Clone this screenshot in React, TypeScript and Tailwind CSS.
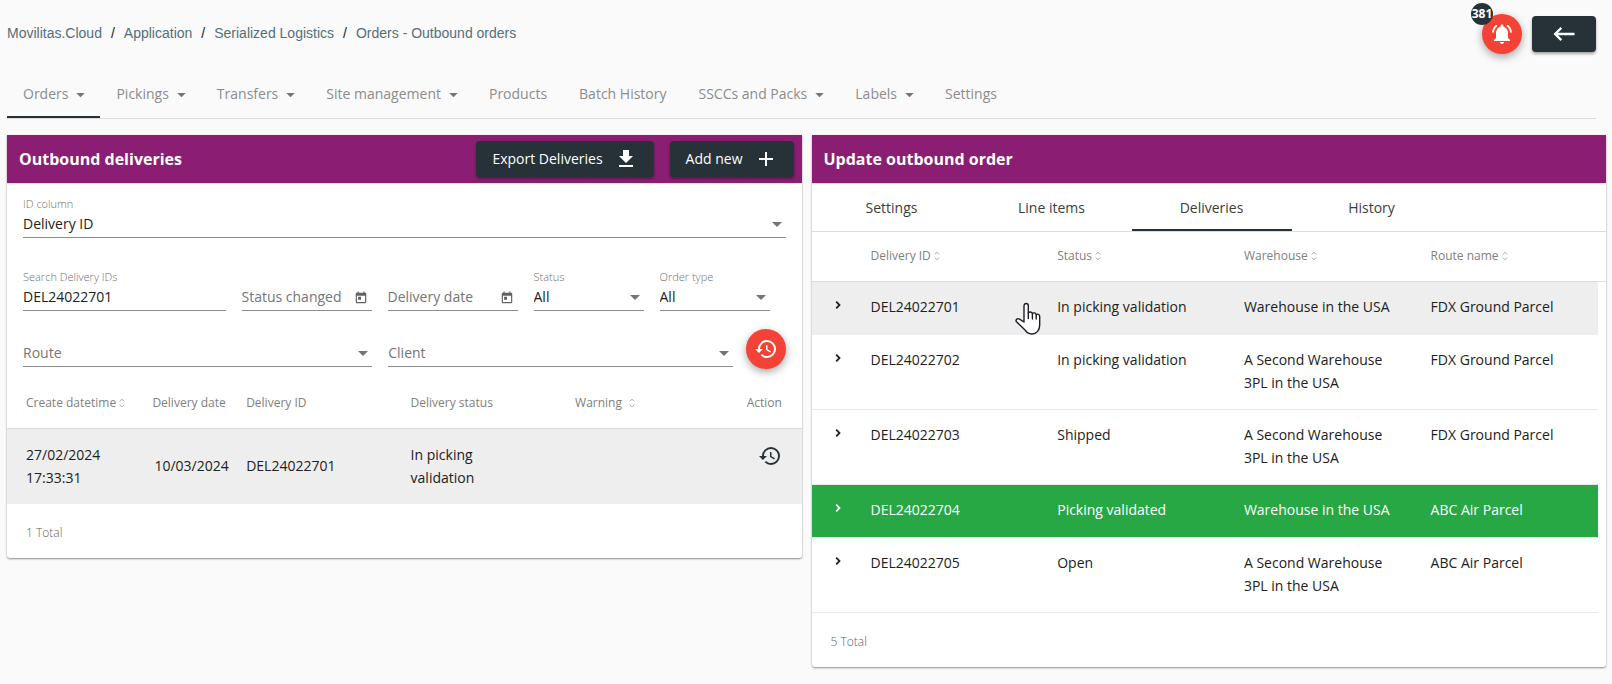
import React, { useId } from "react";
import {
  MdAdd,
  MdFileDownload,
  MdHistory,
  MdKeyboardBackspace,
  MdNotificationsActive,
  MdToday,
} from "react-icons/md";

const crumbs = ["Movilitas.Cloud", "Application", "Serialized Logistics", "Orders - Outbound orders"];

const navItems = [
  { label: "Orders", menu: true, active: true },
  { label: "Pickings", menu: true },
  { label: "Transfers", menu: true },
  { label: "Site management", menu: true },
  { label: "Products" },
  { label: "Batch History" },
  { label: "SSCCs and Packs", menu: true },
  { label: "Labels", menu: true },
  { label: "Settings" },
];

const orderTabs = ["Settings", "Line items", "Deliveries", "History"];

const deliveries = [
  { id: "DEL24022701", status: "In picking validation", warehouse: "Warehouse in the USA", route: "FDX Ground Parcel", tone: "hover" },
  { id: "DEL24022702", status: "In picking validation", warehouse: "A Second Warehouse 3PL in the USA", route: "FDX Ground Parcel", tone: "plain" },
  { id: "DEL24022703", status: "Shipped", warehouse: "A Second Warehouse 3PL in the USA", route: "FDX Ground Parcel", tone: "plain" },
  { id: "DEL24022704", status: "Picking validated", warehouse: "Warehouse in the USA", route: "ABC Air Parcel", tone: "done" },
  { id: "DEL24022705", status: "Open", warehouse: "A Second Warehouse 3PL in the USA", route: "ABC Air Parcel", tone: "plain" },
];

const tones: Record<string, string> = {
  hover: "bg-[#eeeeee] border-[#eeeeee]",
  plain: "border-[#e9e9e9]",
  done: "bg-[#28a745] border-[#e9e9e9] font-medium text-white",
};

function Caret() {
  return (
    <svg width="10" height="5" viewBox="0 0 10 5" className="shrink-0 fill-[#757575]" aria-hidden="true">
      <path d="M0 0h10L5 5z" />
    </svg>
  );
}

function MenuCaret() {
  return (
    <svg width="9" height="5" viewBox="0 0 9 5" className="mt-[3px] -mr-px shrink-0 fill-[#757575]" aria-hidden="true">
      <path d="M.3 0h8.400L4.500 4.300z" />
    </svg>
  );
}

function ExpandMark() {
  return (
    <svg width="16" height="16" viewBox="0 0 16 16" className="fill-none stroke-current" strokeWidth="1.800" aria-hidden="true">
      <path d="M6.200 4.700 9.500 8l-3.300 3.300" />
    </svg>
  );
}

function SortMark() {
  return (
    <svg width="6" height="10" viewBox="0 0 6 10" className="shrink-0 fill-none stroke-[#a8a8a8]" aria-hidden="true">
      <path d="M.8 3.4 3 1.2l2.2 2.2M.8 6.6 3 8.8l2.2-2.2" />
    </svg>
  );
}

function SortHeader({ label, wide }: { label: string; wide?: boolean }) {
  return (
    <button type="button" className={wide ? "flex items-center gap-[7px]" : "flex items-center gap-[3px]"}>
      {label}
      <SortMark />
    </button>
  );
}

function SelectField({ label, value, className }: { label?: string; value: string; className: string }) {
  const id = useId();
  return (
    <div className={className}>
      {label && (
        <label htmlFor={id} className="block text-[11px] leading-4 font-light text-[#6e6e6e]">
          {label}
        </label>
      )}
      <div className="grid items-center border-b border-[#8c8c8c]">
        <select
          id={id}
          aria-label={label ? undefined : value}
          className={
            label
              ? "col-start-1 row-start-1 h-[25px] w-full appearance-none bg-transparent pr-5 pb-[2px] text-[#212121] outline-none"
              : "col-start-1 row-start-1 h-[25px] w-full appearance-none bg-transparent pr-5 pb-[2px] text-[#757575] outline-none"
          }
        >
          <option>{value}</option>
        </select>
        <span className="pointer-events-none col-start-1 row-start-1 mr-1 justify-self-end">
          <Caret />
        </span>
      </div>
    </div>
  );
}

function DateField({ label }: { label: string }) {
  return (
    <div className="flex w-[130px] items-center self-end border-b border-[#8c8c8c] pr-1">
      <input
        aria-label={label}
        placeholder={label}
        className="h-[25px] w-full min-w-0 bg-transparent pb-[2px] text-[#212121] outline-none placeholder:text-[#757575]"
      />
      <button type="button" aria-label={`Pick ${label.toLowerCase()}`} className="text-[#616161]">
        <MdToday size={14} />
      </button>
    </div>
  );
}

function HandPointer() {
  return (
    <svg width="26" height="34" viewBox="0 0 26 34" className="pointer-events-none absolute top-5 left-36" aria-hidden="true">
      <path
        d="M9 20V4.2C9 2.600 9.800 1.500 11.100 1.500s2.200 1 2.200 2.600V11c.5-1.500 3.800-1.400 4.100.6.8-1.200 3.500-.9 3.800 1 .9-.8 3.500-.6 3.500 2v8.400c0 5-3 9-7.700 9-3.600 0-5.600-1.600-7.500-4.600L1.300 19.600c-1-2 1.300-3.700 3.200-2.500z"
        fill="#fff"
        stroke="#1c1c28"
        strokeWidth="1.400"
        strokeLinejoin="round"
      />
      <path d="M13.300 11v5.500M17.400 11.600V17M21.200 12.600V17" fill="none" stroke="#1c1c28" strokeWidth="1.400" strokeLinecap="round" />
    </svg>
  );
}

const cardClass = "min-w-0 flex-1 rounded-b-[3px] bg-white shadow-[0_1px_2px_rgba(0,0,0,0.45)]";
const cardHeadClass = "flex h-12 items-center justify-between bg-[#8b1e72] pr-2 pl-3";
const raisedButton =
  "flex h-9 items-center rounded bg-[#263238] px-4 font-medium text-white shadow-[0_2px_3px_rgba(0,0,0,0.35)]";
const fabClass =
  "flex size-10 shrink-0 items-center justify-center rounded-full bg-[#f44336] text-white shadow-[0_3px_8px_rgba(0,0,0,0.35)]";
const totalClass = "flex h-[54px] items-center pt-[5px] pl-[19px] text-xs font-light text-[#616161]";

export default function App() {
  return (
    <div className="min-h-screen bg-[#fafafa] pr-[6px] pl-[7px] font-['Open_Sans','Noto_Sans',sans-serif] text-sm text-[#212121]">
      <header className="flex h-[70px] items-start justify-between pr-[10px]">
        <nav aria-label="Breadcrumb" className="pt-[23px] font-['Liberation_Sans',Arial,sans-serif] leading-5">
          <ol className="flex gap-[9px]">
            {crumbs.map((crumb, i) => (
              <li key={crumb} className="flex gap-[9px]">
                {i > 0 && <span>/</span>}
                <a href="#" className="text-[#546e7a]">{crumb}</a>
              </li>
            ))}
          </ol>
        </nav>
        <div className="flex items-center gap-[10px] pt-[14px]">
          <div className="relative">
            <button type="button" aria-label="Notifications" className={fabClass}>
              <MdNotificationsActive size={24} />
            </button>
            <span className="absolute -top-[11px] -left-[11px] flex size-[22px] items-center justify-center rounded-full bg-[#263238] text-xs font-bold text-white">
              381
            </span>
          </div>
          <button type="button" aria-label="Back" className={`${raisedButton} w-16 justify-center`}>
            <MdKeyboardBackspace size={28} className="shrink-0" />
          </button>
        </div>
      </header>

      <nav aria-label="Sections" className="mr-[10px] flex h-[49px] border-b border-[#dcdcdc]">
        {navItems.map((item) => (
          <a
            key={item.label}
            href="#"
            className={
              item.active
                ? "flex items-center gap-2 border-b-2 border-[#263238] px-4 pt-[2px] text-[#8c8c8c]"
                : "flex items-center gap-2 px-4 text-[#8c8c8c]"
            }
          >
            {item.label}
            {item.menu && <MenuCaret />}
          </a>
        ))}
      </nav>

      <main className="flex items-start gap-[10px] pt-4">
        <section className={cardClass}>
          <div className={cardHeadClass}>
            <h2 className="text-base font-bold text-white">Outbound deliveries</h2>
            <div className="flex gap-4">
              <button type="button" className={`${raisedButton} gap-[11px]`}>
                Export Deliveries
                <MdFileDownload size={24} />
              </button>
              <button type="button" className={`${raisedButton} gap-[11px]`}>
                Add new
                <MdAdd size={24} />
              </button>
            </div>
          </div>

          <form className="border-t border-[#e4e4e4] px-4 pt-3 pb-[9px]">
            <SelectField label="ID column" value="Delivery ID" className="w-full" />
            <div className="mt-[31px] flex gap-4 pr-4">
              <div className="min-w-0 flex-1">
                <label htmlFor="search-ids" className="block text-[11px] leading-4 font-light text-[#6e6e6e]">
                  Search Delivery IDs
                </label>
                <input
                  id="search-ids"
                  defaultValue="DEL24022701"
                  className="block h-[26px] w-full border-b border-[#8c8c8c] bg-transparent pb-[2px] outline-none"
                />
              </div>
              <DateField label="Status changed" />
              <DateField label="Delivery date" />
              <SelectField label="Status" value="All" className="w-[110px]" />
              <SelectField label="Order type" value="All" className="w-[110px]" />
            </div>
            <div className="mt-[18px] flex items-end">
              <SelectField value="Route" className="mr-4 w-[calc(50%-32px)] pb-[2px]" />
              <SelectField value="Client" className="mr-[13px] min-w-0 flex-1 pb-[2px]" />
              <button type="button" aria-label="Reset filters" className={fabClass}>
                <MdHistory size={24} />
              </button>
            </div>
          </form>

          <table className="w-full table-fixed border-collapse text-left leading-[23px]">
            <colgroup>
              <col className="w-[18.300%]" />
              <col className="w-[11.800%]" />
              <col className="w-[20.700%]" />
              <col className="w-[20.700%]" />
              <col className="w-[21.600%]" />
              <col />
            </colgroup>
            <thead>
              <tr className="h-[50px] border-b border-[#dcdcdc] text-xs text-[#808080] *:p-0 *:font-normal">
                <th><div className="pl-[19px]"><SortHeader label="Create datetime" /></div></th>
                <th>Delivery date</th>
                <th>Delivery ID</th>
                <th>Delivery status</th>
                <th><SortHeader label="Warning" wide /></th>
                <th>Action</th>
              </tr>
            </thead>
            <tbody>
              <tr className="border-b border-[#eeeeee] bg-[#eeeeee] *:py-[14px]">
                <td className="pr-7 pl-[19px]">27/02/2024 17:33:31</td>
                <td className="px-[2px]">10/03/2024</td>
                <td>DEL24022701</td>
                <td className="pr-12">In picking validation</td>
                <td />
                <td className="pl-[11px] align-top">
                  <button type="button" aria-label="Delivery history" className="block pt-px text-[#263238]">
                    <MdHistory size={24} />
                  </button>
                </td>
              </tr>
            </tbody>
          </table>
          <p className={totalClass}>1 Total</p>
        </section>

        <section className={cardClass}>
          <div className={cardHeadClass}>
            <h2 className="text-base font-bold text-white">Update outbound order</h2>
          </div>
          <div role="tablist" className="flex h-[49px] border-t border-b border-[#dcdcdc]">
            {orderTabs.map((tab) => (
              <button
                key={tab}
                type="button"
                role="tab"
                aria-selected={tab === "Deliveries"}
                className={
                  tab === "Deliveries"
                    ? "w-40 border-b-2 border-[#263238] pt-[2px] text-[#3c3c3c]"
                    : "w-40 text-[#3c3c3c]"
                }
              >
                {tab}
              </button>
            ))}
          </div>

          <table className="w-full table-fixed border-collapse text-left leading-[23px]">
            <colgroup>
              <col className="w-[59px]" />
              <col className="w-[23.500%]" />
              <col className="w-[23.500%]" />
              <col className="w-[23.500%]" />
              <col />
              <col className="w-2" />
            </colgroup>
            <thead>
              <tr className="h-[49px] border-b border-[#dcdcdc] text-xs text-[#808080] *:p-0 *:font-normal">
                <td />
                <th><SortHeader label="Delivery ID" /></th>
                <th><SortHeader label="Status" /></th>
                <th><SortHeader label="Warehouse" /></th>
                <th><SortHeader label="Route name" /></th>
                <td />
              </tr>
            </thead>
            <tbody>
              {deliveries.map((d) => {
                const cell = `border-b pt-[13px] pb-[15px] align-top ${tones[d.tone]}`;
                return (
                  <tr key={d.id} className="h-[53px]">
                    <td className={`${cell} pl-[18px]`}>
                      <button type="button" aria-label={`Expand ${d.id}`} className="block pt-[2px]">
                        <ExpandMark />
                      </button>
                    </td>
                    <td className={`${cell} relative`}>
                      {d.id}
                      {d.tone === "hover" && <HandPointer />}
                    </td>
                    <td className={cell}>{d.status}</td>
                    <td className={`${cell} pr-10`}>{d.warehouse}</td>
                    <td className={cell}>{d.route}</td>
                    <td />
                  </tr>
                );
              })}
            </tbody>
          </table>
          <p className={totalClass}>5 Total</p>
        </section>
      </main>
    </div>
  );
}
